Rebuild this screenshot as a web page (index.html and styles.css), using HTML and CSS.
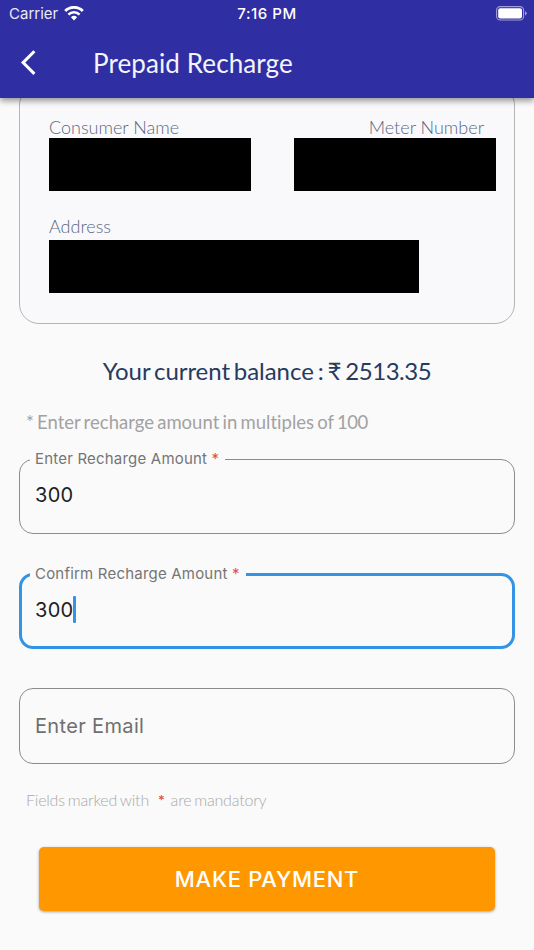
FILE: index.html
```html
<!DOCTYPE html>
<html lang="en">
<head>
  <meta charset="UTF-8">
  <meta name="viewport" content="width=device-width, initial-scale=1.0">
  <title>Prepaid Recharge</title>
  <link rel="stylesheet" href="styles.css">
</head>
<body>
  <header class="header">
    <div class="status-bar">
      <div class="carrier">
        <span>Carrier</span>
        <svg class="wifi" width="20" height="15" viewBox="0 0 20 15">
          <path d="M1.2 5a12.5 12.5 0 0 1 17.6 0" fill="none" stroke="#fff" stroke-width="2.8"/>
          <path d="M4.4 8.6a7.9 7.9 0 0 1 11.2 0" fill="none" stroke="#fff" stroke-width="2.5"/>
          <path d="M10 14.6l-3.1-3.3a4.5 4.5 0 0 1 6.2 0z" fill="#fff"/>
        </svg>
      </div>
      <span class="clock">7:16 PM</span>
      <svg class="battery" width="32" height="15" viewBox="0 0 32 15">
        <rect x="0.6" y="0.6" width="27" height="13.4" rx="3.6" fill="none" stroke="#a19fd8" stroke-width="1.1"/>
        <rect x="2.2" y="2.2" width="23.8" height="10.2" rx="2" fill="#fff"/>
        <path d="M29 5.2q1.7 0.6 1.7 2.1t-1.7 2.1z" fill="#a19fd8"/>
      </svg>
    </div>
    <div class="app-bar">
      <svg class="back" width="18" height="28" viewBox="0 0 18 28">
        <path d="M15.4 2.3L4.1 13.6l11.3 11.3" fill="none" stroke="#fff" stroke-width="3"/>
      </svg>
      <h1 class="title">Prepaid Recharge</h1>
    </div>
  </header>

  <main class="content">
    <section class="card">
      <div class="card-row">
        <div class="info">
          <span class="info-label">Consumer Name</span>
          <div class="redacted"></div>
        </div>
        <div class="info info-right">
          <span class="info-label">Meter Number</span>
          <div class="redacted"></div>
        </div>
      </div>
      <div class="info info-address">
        <span class="info-label">Address</span>
        <div class="redacted"></div>
      </div>
    </section>

    <p class="balance">Your current balance : ₹ <span class="amount">2513.35</span></p>
    <p class="hint">* Enter recharge amount in multiples of <span class="amount">100</span></p>

    <fieldset class="field">
      <legend class="legend-amount">Enter Recharge Amount <span class="star">*</span></legend>
      <span class="value">300</span>
    </fieldset>

    <fieldset class="field field-focused">
      <legend class="legend-confirm">Confirm Recharge Amount <span class="star">*</span></legend>
      <span class="value">300</span><span class="caret"></span>
    </fieldset>

    <div class="field field-email">
      <span class="placeholder">Enter Email</span>
    </div>

    <p class="note"><span>Fields marked with</span><span class="star">*</span><span>are mandatory</span></p>

    <button class="pay-button">MAKE PAYMENT</button>
  </main>
</body>
</html>
```

FILE: styles.css
```css
* {
  box-sizing: border-box;
}

body {
  margin: 0;
  height: 950px;
  overflow: hidden;
  background: #fafafa;
  font-family: 'Lato', sans-serif;
}

.header {
  position: relative;
  z-index: 1;
  height: 98px;
  background: #302ea3;
  color: #fff;
  box-shadow: 0 3px 6px rgba(0, 0, 0, 0.4);
}

.status-bar {
  display: grid;
  grid-template-columns: 1fr auto 1fr;
  align-items: center;
  height: 27px;
  padding: 0 6px 0 9px;
  font-family: 'Inter', sans-serif;
  font-size: 15px;
}

.carrier {
  display: flex;
  align-items: center;
  gap: 6px;
}

.carrier span {
  opacity: 0.9;
}

.clock {
  margin-right: 3px;
  font-weight: 500;
  letter-spacing: 0.55px;
}

.battery {
  justify-self: end;
}

.app-bar {
  display: flex;
  align-items: center;
  height: 71px;
  padding-left: 19px;
}

.title {
  margin: 0 0 0 56px;
  font-size: 26px;
  font-weight: 400;
  letter-spacing: 0.1px;
  color: #f4f4fb;
}

.content {
  display: flex;
  flex-direction: column;
  margin-top: -13px;
  padding: 0 19px;
}

/* Consumer details, top edge is scrolled under the header */
.card {
  height: 239px;
  padding: 31px 18px 0 29px;
  border: 1px solid #b5b5b8;
  border-radius: 20px;
  background: #f9f9fc;
}

.card-row {
  display: flex;
  justify-content: space-between;
}

.info {
  width: 202px;
}

.info-label {
  display: block;
  height: 21px;
  line-height: 20px;
  font-size: 18px;
  font-weight: 300;
  color: #5c6880;
}

.info-right .info-label {
  padding-right: 12px;
  text-align: right;
}

.redacted {
  height: 53px;
  background: #000;
}

.info-address {
  width: 370px;
  margin-top: 25px;
}

.info-address .redacted {
  margin-top: 3px;
}

.balance {
  margin: 32px 0 0;
  line-height: 30px;
  font-size: 24px;
  letter-spacing: -0.05px;
  word-spacing: -2.2px;
  text-align: center;
  color: #273a60;
}

.amount {
  letter-spacing: -0.45px;
}

.hint {
  margin: 24px 0 0 7px;
  line-height: 24px;
  font-size: 18.5px;
  letter-spacing: 0.02px;
  word-spacing: -1.6px;
  color: #a2a2a2;
}

.field {
  height: 85px;
  margin: 15px 0 0;
  padding: 0 10px;
  border: 1px solid #8c8c8c;
  border-radius: 14px;
  font-family: 'Inter', sans-serif;
}

.field legend {
  height: 20px;
  padding: 0 5px;
  line-height: 20px;
  font-size: 15px;
  letter-spacing: 0.2px;
  white-space: nowrap;
  color: #757575;
}

.legend-amount {
  width: 195px;
}

.legend-confirm {
  width: 216px;
}

.star {
  color: #ea4a45;
}

.value {
  display: inline-block;
  margin: 10px 0 0 5px;
  line-height: 32px;
  font-size: 20px;
  letter-spacing: 0.3px;
  vertical-align: top;
  color: #212121;
}

.field-focused {
  margin-top: 30px;
  padding: 0 8px;
  border: 3px solid #3394e6;
}

.caret {
  display: inline-block;
  width: 3px;
  height: 27px;
  margin: 12px 0 0 -1px;
  border-radius: 1px;
  background: #3394e6;
}

.field-email {
  display: flex;
  align-items: center;
  height: 76px;
  margin-top: 39px;
  padding: 0 15px;
}

.placeholder {
  font-size: 20px;
  letter-spacing: 0.35px;
  color: #6f6f6f;
}

.note {
  display: flex;
  margin: 26px 0 0 7px;
  line-height: 20px;
  font-size: 16px;
  font-weight: 300;
  letter-spacing: -0.2px;
  word-spacing: -1.2px;
  color: #a9a9a9;
}

.note .star {
  margin: 0 6px 0 9px;
  font-weight: 700;
}

.pay-button {
  height: 64px;
  margin: 37px 20px 0;
  border: none;
  border-radius: 5px;
  background: #ff9800;
  box-shadow: 0 1px 3px rgba(0, 0, 0, 0.35);
  color: #fff;
  font-family: 'Inter', sans-serif;
  font-size: 22px;
  font-weight: 500;
  letter-spacing: 0.7px;
}
```
